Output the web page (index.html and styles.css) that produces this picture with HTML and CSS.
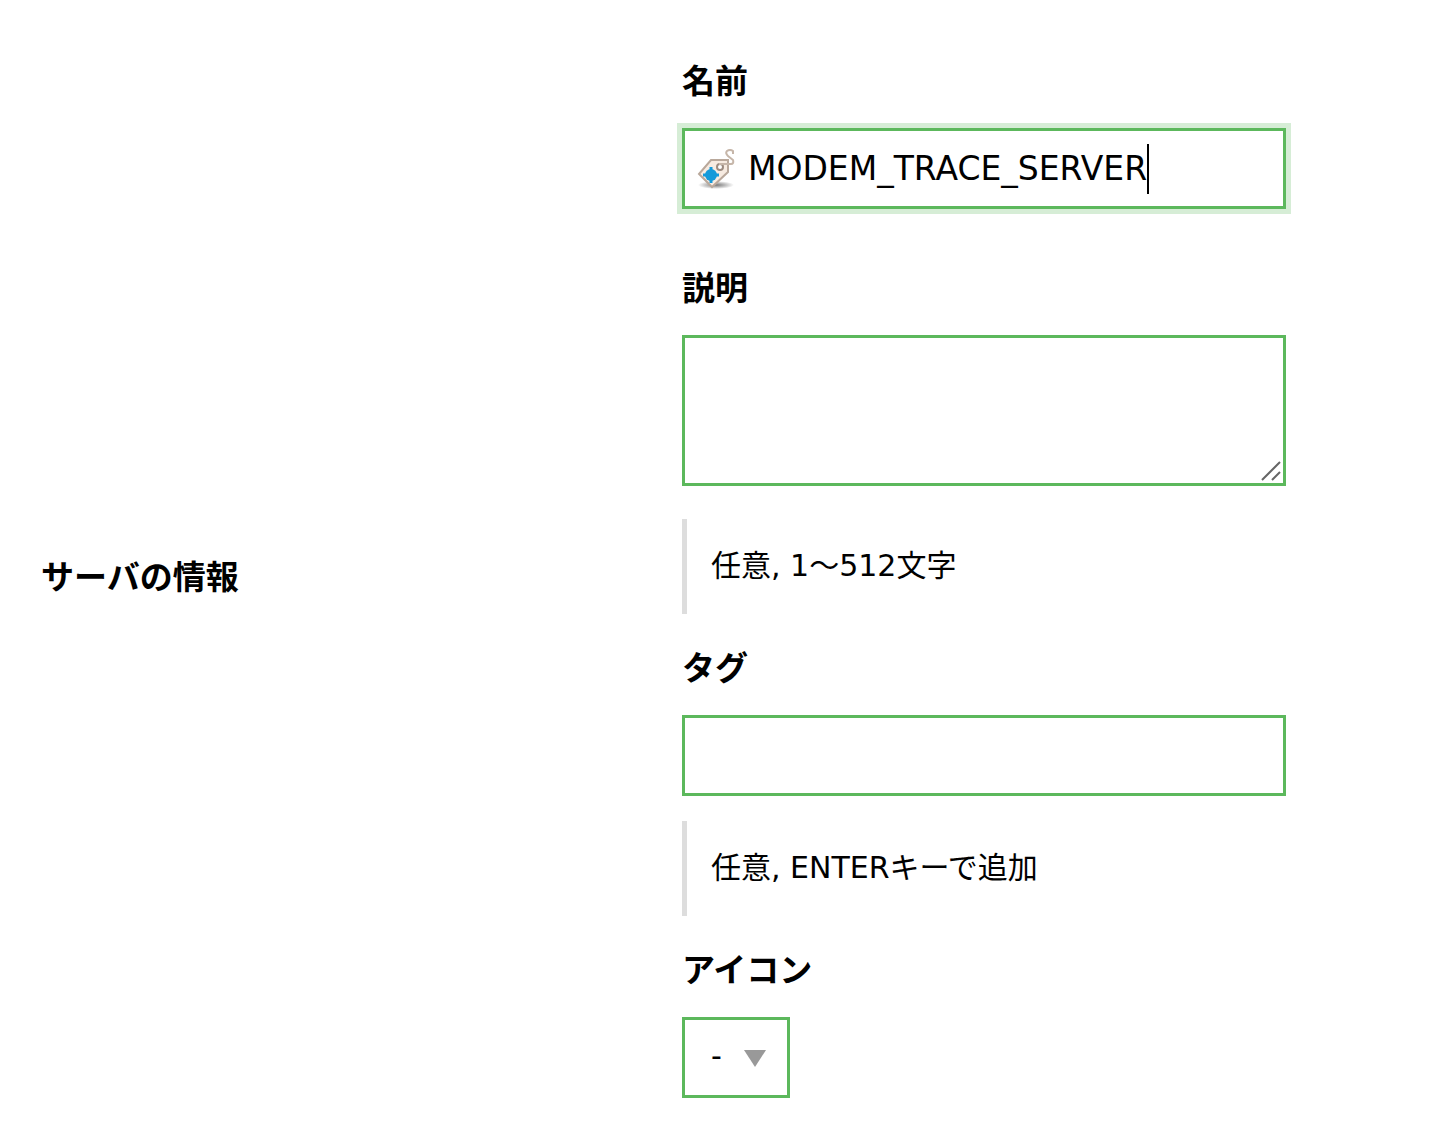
FILE: index.html
```
<!DOCTYPE html>
<html lang="ja">
<head>
    <meta charset="UTF-8">
    <meta name="viewport" content="width=device-width, initial-scale=1.0">
    <title>サーバの情報</title>
    <link rel="stylesheet" href="styles.css">
</head>
<body>

<form class="server-form">
    <h2 class="section-title" id="sectionTitle">サーバの情報</h2>

    <div class="fields" role="group" aria-labelledby="sectionTitle">
        <div class="field field-name">
            <label for="name">名前</label>
            <div class="control name-box">
                <svg class="tag-icon" viewBox="0 0 38 40" aria-hidden="true">
                    <defs>
                        <radialGradient id="tagShadow">
                            <stop offset="0" stop-color="#777"/>
                            <stop offset="1" stop-color="#777" stop-opacity="0"/>
                        </radialGradient>
                    </defs>
                    <ellipse cx="19" cy="36" rx="18" ry="4" fill="url(#tagShadow)"/>
                    <path d="M14 11H31V23L15 38L2 25Z" fill="#f7ebe1" stroke="#b9a89b" stroke-width="2"/>
                    <circle cx="14" cy="26" r="6" fill="#149ada"/>
                    <path d="M14 18V34M6 26H22" stroke="#149ada" stroke-width="3"/>
                    <circle cx="23" cy="18" r="3" fill="#fff" stroke="#9c8b80" stroke-width="2"/>
                    <path d="M22 15H34Q37 15 36 11L31 7Q28 4 30 2Q33 0 36 2V5" fill="none" stroke="#c6b6a9" stroke-width="2"/>
                </svg>
                <input type="text" id="name" value="MODEM_TRACE_SERVER">
                <span class="caret"></span>
            </div>
        </div>

        <div class="field">
            <label for="description">説明</label>
            <div class="textarea-box">
                <textarea class="control" id="description" aria-describedby="descriptionHint"></textarea>
                <svg class="grip" viewBox="0 0 20 20" aria-hidden="true">
                    <path d="M1 19L19 1M11 19L19 11"/>
                </svg>
            </div>
            <p class="hint" id="descriptionHint">任意, 1～512文字</p>
        </div>

        <div class="field">
            <label for="tags">タグ</label>
            <input class="control" type="text" id="tags" aria-describedby="tagsHint">
            <p class="hint" id="tagsHint">任意, ENTERキーで追加</p>
        </div>

        <div class="field">
            <label for="icon">アイコン</label>
            <div class="select-box">
                <select class="control" id="icon">
                    <option>-</option>
                </select>
                <svg class="arrow" viewBox="0 0 22 17" aria-hidden="true">
                    <path d="M0 0H22L11 17Z"/>
                </svg>
            </div>
        </div>
    </div>
</form>

</body>
</html>
```
FILE: styles.css
```
* {
    box-sizing: border-box;
}
body {
    margin: 0;
    background-color: #fff;
    color: #000;
    font-family: "DejaVu Sans", "Noto Sans CJK JP", sans-serif;
    font-size: 33px;
}
.server-form {
    display: grid;
    grid-template-columns: 641fr 604fr;
    align-items: center;
    padding: 57px 154px 48px 41px;
}
.section-title,
.field label {
    font-family: "Noto Sans CJK JP", sans-serif;
    font-size: 33px;
    font-weight: bold;
    line-height: 44px;
}
.section-title {
    margin: 0 0 5px;
}
.fields {
    display: flex;
    flex-direction: column;
    gap: 30px;
}
.field-name {
    margin-bottom: 25px;
}
.field label {
    display: block;
    margin-bottom: 27px;
}
.control {
    display: block;
    width: 100%;
    height: 81px;
    margin: 0;
    padding: 0 12px;
    border: 3px solid #5cb85c;
    border-radius: 0;
    outline: none;
    background-color: #fff;
    color: #000;
    font-family: inherit;
    font-size: 33px;
}
.name-box {
    display: flex;
    align-items: center;
    box-shadow: 0 0 0 5px #d6edd6;
}
.name-box input {
    field-sizing: content;
    max-width: 100%;
    padding: 0;
    border: none;
    outline: none;
    background: none;
    color: #000;
    font-family: inherit;
    font-size: 33px;
    caret-color: transparent;
}
.tag-icon {
    flex: none;
    width: 38px;
    height: 40px;
    margin-right: 13px;
}
.caret {
    width: 2px;
    height: 50px;
    background-color: #000;
}
.textarea-box {
    position: relative;
    margin-bottom: 33px;
}
textarea.control {
    height: 151px;
    padding: 12px;
    resize: none;
}
.grip {
    position: absolute;
    right: 5px;
    bottom: 5px;
    width: 20px;
    height: 20px;
    fill: none;
    stroke: #666;
    stroke-width: 2px;
    pointer-events: none;
}
.hint {
    margin: 25px 0 0;
    padding: 23px 24px 25px;
    border-left: 5px solid #ddd;
    font-size: 30px;
    line-height: 47px;
}
.select-box {
    position: relative;
    width: 108px;
}
select.control {
    padding: 0 26px 4px;
    appearance: none;
    font-size: 30px;
}
.arrow {
    position: absolute;
    top: 33px;
    right: 24px;
    width: 22px;
    height: 17px;
    fill: #999;
    pointer-events: none;
}
```
